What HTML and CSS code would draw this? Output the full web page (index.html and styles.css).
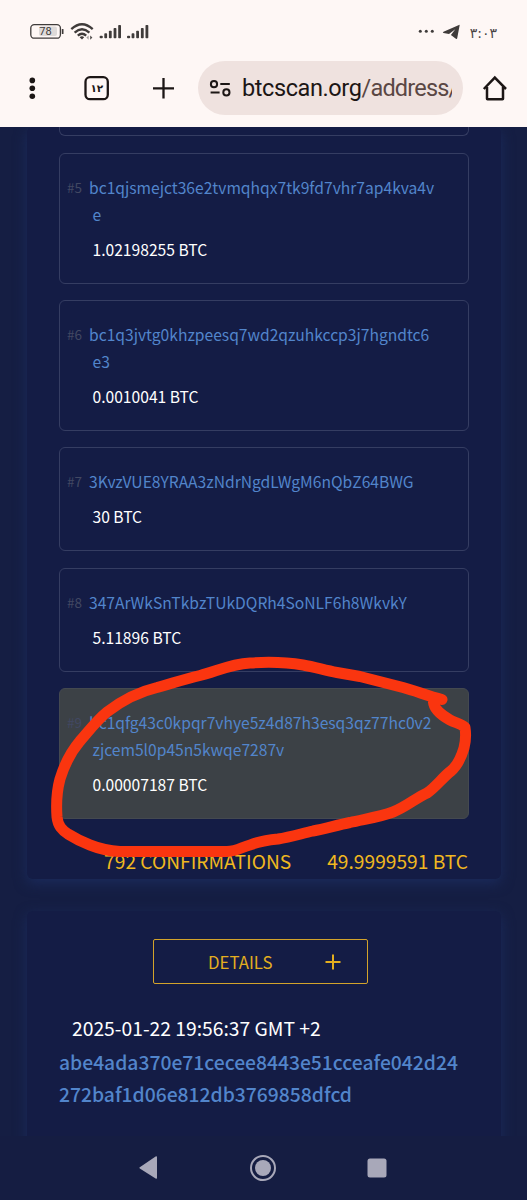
FILE: index.html
```html
<!DOCTYPE html>
<html lang="en">
<head>
  <meta charset="UTF-8" />
  <meta name="viewport" content="width=device-width, initial-scale=1.0"/>
  <title>btcscan.org</title>
  <link rel="stylesheet" href="styles.css">
</head>
<body>

<header class="browser">
  <div class="status-bar">
    <svg class="status-icons" width="120" height="20" viewBox="30 22 120 20">
      <rect x="39" y="26.5" width="18" height="9.5" rx="2" fill="#dedad9"/>
      <rect x="30.8" y="24.6" width="29.6" height="13.6" rx="3.5" fill="none" stroke="#3f3b3a" stroke-width="1.3"/>
      <rect x="61.8" y="29" width="1.7" height="5" rx=".6" fill="#3f3b3a"/>
      <text class="battery-text" x="45.5" y="35.2" text-anchor="middle">78</text>
      <g fill="none" stroke="#3f3b3a" stroke-width="2.3">
        <path d="M71.3 29.2Q82 19.3 92.7 29.2"/>
        <path d="M74.6 32.6Q82 26 89.4 32.6"/>
        <path d="M77.8 35.7Q82 31.9 86.2 35.7"/>
      </g>
      <path d="M79.6 37.2Q82 35.2 84.2 37.2L82 39.5Z" fill="#3f3b3a"/>
      <path d="M88.6 35.5v4.2l-2.2-2.2z" fill="#a5a09f"/>
      <path d="M90.2 35.5v4.2l2.2-2.2z" fill="#4f4b4a"/>
      <g fill="#3f3b3a">
        <rect x="99.6" y="35.7" width="3.2" height="2.6" rx="1"/>
        <rect x="104.3" y="33.2" width="2.8" height="5.1" rx=".8"/>
        <rect x="108.9" y="30.7" width="2.8" height="7.6" rx=".8"/>
        <rect x="113.6" y="28" width="2.8" height="10.3" rx=".8"/>
        <rect x="118.2" y="25" width="2.8" height="13.3" rx=".8"/>
        <rect x="127" y="35.7" width="3.2" height="2.6" rx="1"/>
        <rect x="131.6" y="33.2" width="2.8" height="5.1" rx=".8"/>
        <rect x="136.2" y="30.7" width="2.8" height="7.6" rx=".8"/>
        <rect x="140.9" y="28" width="2.8" height="10.3" rx=".8"/>
        <rect x="145.5" y="25" width="2.8" height="13.3" rx=".8"/>
      </g>
    </svg>
    <div class="status-right">
      <svg width="42" height="18" viewBox="419 23 42 18" fill="#3f3b3a">
        <circle cx="421.3" cy="31.3" r="1.5"/>
        <circle cx="427.3" cy="31.3" r="1.5"/>
        <circle cx="433.3" cy="31.3" r="1.5"/>
        <path d="M444.5 31.8L460 24.9q.8-.3.6.6l-2.4 12.8q-.3 1.2-1.3.5l-5-3.9 4.4-5.6-6.3 4.7-5.5-1q-1.3-.4 0-1.2z"/>
      </svg>
      <span class="clock">۳:۰۳</span>
    </div>
  </div>

  <div class="toolbar">
    <svg width="176" height="30" viewBox="22 73 176 30">
      <g fill="#1c1615">
        <circle cx="32.3" cy="80.4" r="2.8"/>
        <circle cx="32.3" cy="88.3" r="2.8"/>
        <circle cx="32.3" cy="96.2" r="2.8"/>
      </g>
      <rect x="85.5" y="77.2" width="22.3" height="22" rx="4.5" fill="none" stroke="#1c1615" stroke-width="2.3"/>
      <text class="tab-count" x="96.8" y="92.3" text-anchor="middle">۱۲</text>
      <path d="M163.5 78v20.5M153 88.3h21" stroke="#1c1615" stroke-width="2.3"/>
    </svg>
    <div class="url-bar">
      <svg width="22" height="18" viewBox="209 79 22 18" fill="none" stroke="#1c1615" stroke-width="2">
        <circle cx="214" cy="84.2" r="3.1"/>
        <path d="M220.3 84h9.5M210.6 92.4h9"/>
        <circle cx="226.4" cy="92.4" r="3.1"/>
      </svg>
      <span class="url">btcscan.org<span class="path">/address/</span></span>
    </div>
    <svg class="home" width="26" height="26" viewBox="482 75 26 26" fill="none" stroke="#1c1615" stroke-width="2.5">
      <path d="M483.8 89L494.8 77.6 506 89"/>
      <path d="M487 87v11.7q0 .5.5.5h15q.5 0 .5-.5V87"/>
    </svg>
  </div>
</header>

<main class="page">
  <section class="panel outputs">
    <div class="output previous"></div>
    <div class="output">
      <p class="address"><span class="index">#5</span>bc1qjsmejct36e2tvmqhqx7tk9fd7vhr7ap4kva4v<br>e</p>
      <p class="amount">1.02198255 BTC</p>
    </div>
    <div class="output">
      <p class="address"><span class="index">#6</span>bc1q3jvtg0khzpeesq7wd2qzuhkccp3j7hgndtc6<br>e3</p>
      <p class="amount">0.0010041 BTC</p>
    </div>
    <div class="output">
      <p class="address"><span class="index">#7</span>3KvzVUE8YRAA3zNdrNgdLWgM6nQbZ64BWG</p>
      <p class="amount">30 BTC</p>
    </div>
    <div class="output">
      <p class="address"><span class="index">#8</span>347ArWkSnTkbzTUkDQRh4SoNLF6h8WkvkY</p>
      <p class="amount">5.11896 BTC</p>
    </div>
    <div class="output active">
      <p class="address"><span class="index">#9</span>bc1qfg43c0kpqr7vhye5z4d87h3esq3qz77hc0v2<br>zjcem5l0p45n5kwqe7287v</p>
      <p class="amount">0.00007187 BTC</p>
    </div>
    <div class="totals">
      <span>792 CONFIRMATIONS</span>
      <span>49.9999591 BTC</span>
    </div>
  </section>

  <section class="panel transaction">
    <button class="details">
      <span>DETAILS</span>
      <svg width="16" height="16" viewBox="0 0 16 16" stroke="#e3ae1f" stroke-width="2"><path d="M8 .5v15M.5 8h15"/></svg>
    </button>
    <p class="time">2025-01-22 19:56:37 GMT +2</p>
    <p class="hash">abe4ada370e71cecee8443e51cceafe042d24<br>272baf1d06e812db3769858dfcd</p>
  </section>
</main>

<nav class="system-nav">
  <svg width="20" height="26" viewBox="0 0 20 26"><path d="M.8 12.2L16.6 1.6q1.4-.8 1.4.8v20.4q0 1.6-1.4.8L.8 13.4q-.9-.6 0-1.2z" fill="#a8a8b9"/></svg>
  <svg width="28" height="28" viewBox="0 0 28 28"><circle cx="14" cy="14" r="12" fill="none" stroke="#a8a8b9" stroke-width="2"/><circle cx="14" cy="14" r="8" fill="#a8a8b9"/></svg>
  <svg width="20" height="20" viewBox="0 0 20 20"><rect x=".5" y=".5" width="19" height="19" rx="2.5" fill="#a8a8b9"/></svg>
</nav>

<!-- hand drawn circle around output #9 -->
<svg class="marker" width="527" height="1200" viewBox="0 0 527 1200">
  <path d="M442 699.500C428 696 416 691 403 687.500L360 676.500 337 672.500C324 670 315 667 303 665C285 662 265 662 250 663C230 664 215 672 200 675.500C185 679 170 684 157 687.500C138 692 120 702 107 712C97 720 88 732 80 741C69 754 64 766 60 779C57 790 56 803 57 817C58 826 62 830 68 834C76 839 82 842 90 845C100 849 108 851 120 851.500L227 851.500C237 851 242 847 250 845C260 841 268 840 278 839C290 837 300 834 313 831C325 829 337 825 350 822.500C365 819 380 817 393 812C406 807 416 798 427 793C435 788 443 777 451 771C458 765 461 758 464 748C466 740 466 734 465 727.500C461 723 455 723 450 720C443 716 434 709 433.500 702"/>
</svg>

</body>
</html>
```

FILE: styles.css
```css
* {
  box-sizing: border-box;
}

body {
  margin: 0;
  height: 1200px;
  position: relative;
  display: flex;
  flex-direction: column;
  overflow: hidden;
  background: #151e43;
  color: #fff;
  font-family: 'Noto Sans CJK SC', sans-serif;
}

p {
  margin: 0;
}

svg {
  display: block;
  flex-shrink: 0;
}

.browser {
  height: 127px;
  flex-shrink: 0;
  background: #fef7f5;
  color: #1c1615;
  font-family: Roboto, sans-serif;
}

.status-bar {
  display: flex;
  justify-content: space-between;
  padding: 22px 30px 0 30px;
  height: 61px;
}

.battery-text {
  font: 11px Roboto, sans-serif;
  fill: #3f3b3a;
}

.status-right {
  display: flex;
  gap: 10px;
  padding-top: 1px;
}

.clock {
  font: 14px/20px 'DejaVu Sans', sans-serif;
  letter-spacing: -0.6px;
  color: #4a4645;
}

.toolbar {
  display: flex;
  align-items: center;
  height: 54px;
  padding-left: 22px;
}

.tab-count {
  font: bold 10.5px 'DejaVu Sans', sans-serif;
  fill: #1c1615;
}

.url-bar {
  display: flex;
  align-items: center;
  gap: 11px;
  width: 265px;
  height: 54px;
  padding: 0 11px;
  border-radius: 27px;
  background: #efe2df;
}

.url {
  width: 210px;
  overflow: hidden;
  white-space: nowrap;
  font-size: 23.5px;
  letter-spacing: -0.4px;
}

.path {
  color: #5a4744;
  letter-spacing: -0.8px;
}

.home {
  margin-left: 19px;
}

.page {
  height: 1009px;
  overflow: hidden;
  padding: 0 26px 0 27px;
}

.panel {
  padding: 0 32px;
  border-radius: 6px;
  background: #141c45;
  box-shadow: 0 4px 13px #1b2b5c;
}

.outputs {
  height: 752px;
}

.output {
  min-height: 104px;
  margin-bottom: 16.3px;
  padding: 20px 7px;
  border: 1px solid #353d62;
  border-radius: 6px;
  font-size: 15.64px;
  line-height: 27px;
}

.output.previous {
  min-height: 0;
  height: 9.4px;
  padding: 0;
  border-top: none;
  border-radius: 0 0 6px 6px;
}

.output.active {
  background: #3c4146;
  border-color: #444950;
}

.address {
  padding-left: 25.5px;
  text-indent: -25.5px;
  color: #5285cb;
  white-space: nowrap;
}

.index {
  display: inline-block;
  width: 22px;
  text-indent: 0;
  font-size: 13.5px;
  line-height: 1;
  vertical-align: 1px;
  color: #424862;
}

.amount {
  margin-top: 8px;
  padding-left: 25.5px;
}

.totals {
  display: flex;
  justify-content: flex-end;
  gap: 36px;
  margin-top: 27px;
  padding-right: 1px;
  font-size: 19.2px;
  line-height: 30px;
  color: #f0b820;
}

.transaction {
  height: 320px;
  margin-top: 32px;
  padding-top: 28px;
}

.details {
  display: flex;
  align-items: center;
  width: 215px;
  height: 45px;
  margin-left: 94px;
  padding: 0 26px 0 54px;
  justify-content: space-between;
  border: 1px solid #d3a32b;
  border-radius: 2px;
  background: none;
  color: #e3ae1f;
  font: 16.8px 'Noto Sans CJK SC', sans-serif;
}

.time {
  margin-top: 28px;
  padding-left: 13px;
  font-size: 19.3px;
  line-height: 32px;
}

.hash {
  margin-top: 2px;
  font-size: 19.3px;
  font-weight: 500;
  line-height: 32px;
  color: #5285cb;
  white-space: nowrap;
}

.system-nav {
  display: flex;
  align-items: center;
  justify-content: space-between;
  height: 64px;
  padding: 0 140px 0 139px;
  background: #151d42;
}

.marker {
  position: absolute;
  top: 0;
  left: 0;
}

.marker path {
  fill: none;
  stroke: #fa350f;
  stroke-width: 11;
  stroke-linecap: round;
  stroke-linejoin: round;
}
```
